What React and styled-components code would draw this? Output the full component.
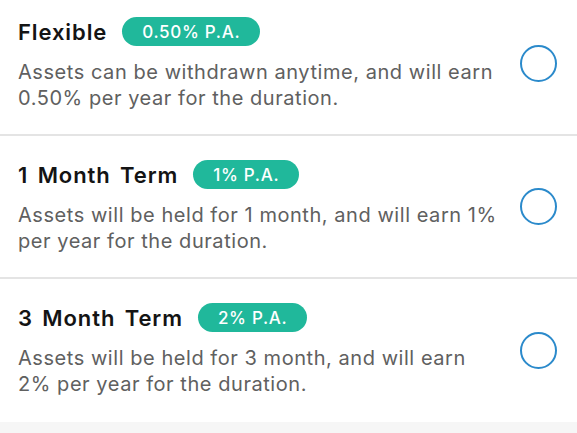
import React from 'react';
import styled, { createGlobalStyle } from 'styled-components';

const GlobalStyle = createGlobalStyle`
  body {
    margin: 0;
    background-color: #f6f6f6;
    font-family: Inter, "Noto Sans", sans-serif;
    -webkit-font-smoothing: antialiased;
  }
`
const ListDiv = styled.div`
  display: flex;
  flex-direction: column;
  margin-top: -7px;
  background-color: #fff;
`
const RowDiv = styled.div`
  display: flex;
  flex-direction: row;
  align-items: center;
  height: 143px;
  box-sizing: border-box;
  padding: 24px 20px 0 18px;
  border-bottom: 2px solid #e4e4e4;

  &:last-child{
    border-bottom: none;
  }
`
const TextDiv = styled.div`
  display: flex;
  flex-direction: column;
  align-self: flex-start;
  flex: 1;
`
const HeadDiv = styled.div`
  display: flex;
  flex-direction: row;
  align-items: center;
  height: 29px;
  gap: 15px;
`
const Title_Span = styled.span`
  font-size: 22px;
  line-height: 28px;
  font-weight: 600;
  color: #141414;
  letter-spacing: 0.9px;
  word-spacing: 3px;
`
const Badge_Span = styled.span`
  display: inline-flex;
  align-items: center;
  height: 29px;
  padding: 0 20px;
  border-radius: 15px;
  background-color: #20b89b;
  color: #fff;
  font-size: 17px;
  font-weight: 500;
  letter-spacing: 0.7px;
`
const Desc_P = styled.p`
  margin: 13px 0 0 0;
  font-size: 20px;
  line-height: 26px;
  color: #606060;
  letter-spacing: 0.55px;
  white-space: nowrap;
`
const RadioSpan = styled.span`
  width: 37px;
  height: 37px;
  box-sizing: border-box;
  border-radius: 50%;
  border: 2.5px solid #2b8acb;
  margin-top: -24px;
  flex-shrink: 0;
`

const plans = [
  {
    title: 'Flexible',
    rate: '0.50% P.A.',
    lines: ['Assets can be withdrawn anytime, and will earn', '0.50% per year for the duration.'],
  },
  {
    title: '1 Month Term',
    rate: '1% P.A.',
    lines: ['Assets will be held for 1 month, and will earn 1%', 'per year for the duration.'],
  },
  {
    title: '3 Month Term',
    rate: '2% P.A.',
    lines: ['Assets will be held for 3 month, and will earn', '2% per year for the duration.'],
  },
]

const App = () => {
  return (
    <>
      <GlobalStyle />
      <ListDiv>
        {plans.map((plan) => (
          <RowDiv key={plan.title}>
            <TextDiv>
              <HeadDiv>
                <Title_Span>{plan.title}</Title_Span>
                <Badge_Span>{plan.rate}</Badge_Span>
              </HeadDiv>
              <Desc_P>{plan.lines[0]}<br />{plan.lines[1]}</Desc_P>
            </TextDiv>
            <RadioSpan />
          </RowDiv>
        ))}
      </ListDiv>
    </>
  )
}

export default App;
